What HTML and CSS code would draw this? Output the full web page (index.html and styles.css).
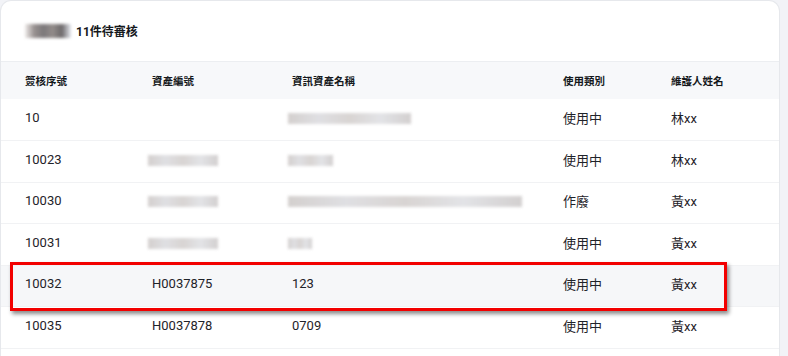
FILE: index.html
```html
<!DOCTYPE html>
<html lang="zh-Hant">
<head>
<meta charset="utf-8">
<title>待審核</title>
<link rel="stylesheet" href="styles.css">
</head>
<body>
<div class="card">
  <div class="card-head">
    <span class="blur blur-title"></span>
    <span class="title">11件待審核</span>
  </div>
  <table class="grid">
    <colgroup>
      <col class="c1"><col class="c2"><col class="c3"><col class="c4"><col class="c5">
    </colgroup>
    <thead>
      <tr><th>簽核序號</th><th>資產編號</th><th>資訊資產名稱</th><th>使用類別</th><th>維護人姓名</th></tr>
    </thead>
    <tbody>
      <tr><td>10</td><td></td><td><span class="blur w123"></span></td><td>使用中</td><td>林xx</td></tr>
      <tr><td>10023</td><td><span class="blur w70"></span></td><td><span class="blur w45"></span></td><td>使用中</td><td>林xx</td></tr>
      <tr><td>10030</td><td><span class="blur w70"></span></td><td><span class="blur w234"></span></td><td>作廢</td><td>黃xx</td></tr>
      <tr><td>10031</td><td><span class="blur w70"></span></td><td><span class="blur w24"></span></td><td>使用中</td><td>黃xx</td></tr>
      <tr class="hl"><td>10032</td><td>H0037875</td><td>123</td><td>使用中</td><td>黃xx</td></tr>
      <tr><td>10035</td><td>H0037878</td><td>0709</td><td>使用中</td><td>黃xx</td></tr>
    </tbody>
  </table>
</div>
<div class="mark"></div>
</body>
</html>
```
FILE: styles.css
```css
html, body {
  margin: 0;
  padding: 0;
}
body {
  background: #f2f3f7;
  font-family: Roboto, "Noto Sans CJK TC", sans-serif;
  color: #1f2329;
  width: 788px;
  height: 356px;
  overflow: hidden;
  position: relative;
}
.card {
  width: 780px;
  box-sizing: border-box;
  background: #fff;
  border: 1px solid #e6e8ec;
  border-bottom: none;
  border-radius: 11px 11px 0 0;
  height: 360px;
}
.card-head {
  height: 61px;
  display: flex;
  align-items: center;
  padding-left: 24px;
  padding-bottom: 1px;
  box-sizing: border-box;
  gap: 5px;
  border-bottom: 1px solid #eceef1;
}
.title {
  font-size: 12px;
  font-weight: 700;
  color: #15181c;
}
.blur {
  display: inline-block;
  height: 11px;
  vertical-align: middle;
  background: linear-gradient(90deg, #c9c4c2 0%, #d8d8dc 25%, #cfcac8 50%, #dcdde1 75%, #c8c4c4 100%);
  filter: blur(1.6px);
  opacity: 0.8;
}
.blur-title {
  width: 46px;
  height: 14px;
  background: linear-gradient(90deg, #ece8e6 0%, #8d8584 20%, #6e6a6d 40%, #87807e 60%, #5e5a5c 80%, #e2e5ec 100%);
  opacity: 0.9;
}
.w123 { width: 123px; }
.w70 { width: 70px; }
.w45 { width: 45px; }
.w234 { width: 234px; }
.w24 { width: 24px; }
.grid {
  width: 100%;
  border-collapse: collapse;
  table-layout: fixed;
}
.c1 { width: 127px; }
.c2 { width: 140px; }
.c3 { width: 271px; }
.c4 { width: 108px; }
.grid th {
  background: #f7f8fa;
  height: 37px;
  box-sizing: border-box;
  padding: 0 0 1px 24px;
  text-align: left;
  font-size: 10.5px;
  font-weight: 700;
  color: #15181c;
}
.grid td {
  height: 41.5px;
  box-sizing: border-box;
  padding: 0 0 4px 24px;
  font-size: 13px;
  border-bottom: 1px solid #f1f2f4;
  white-space: nowrap;
}
.grid tr.hl td {
  background: #f6f7f9;
}
.grid td:nth-child(2) .blur, .grid td:nth-child(3) .blur { margin-left: -4px; }
.mark {
  position: absolute;
  left: 10px;
  top: 262px;
  width: 717px;
  height: 49px;
  box-sizing: border-box;
  border: 3px solid #f20000;
  box-shadow: 2px 3px 4px rgba(0, 0, 0, 0.45);
}
```
